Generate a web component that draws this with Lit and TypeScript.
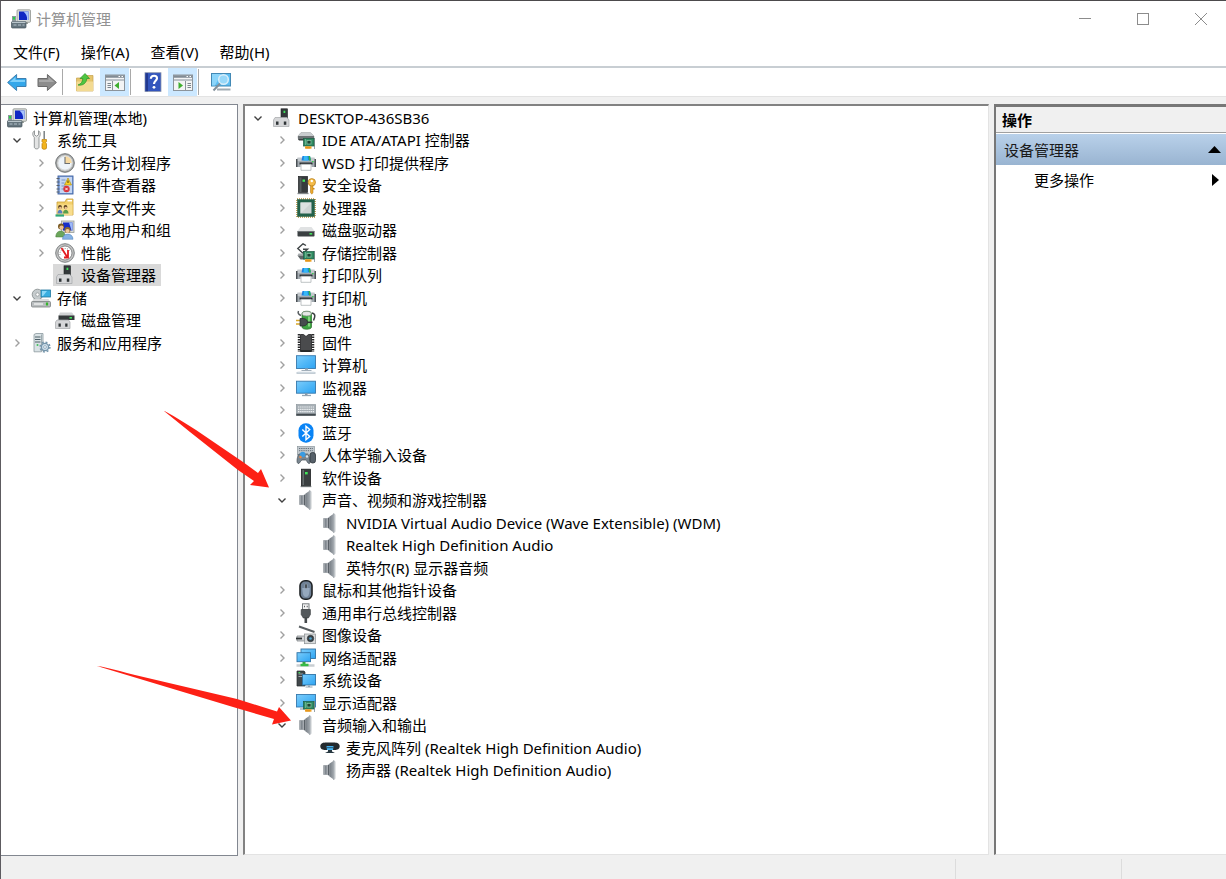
import { LitElement, html, svg, css, SVGTemplateResult, TemplateResult } from "lit";
import { customElement, property, state } from "lit/decorators.js";
import { classMap } from "lit/directives/class-map.js";

/* ---------- reusable pieces of the 20 x 20 icons ---------- */

const card = svg`
  <path d="M18.500 8v11" stroke="#9aa3a8" stroke-width="1"/>
  <rect x="7.500" y="8.500" width="10.500" height="7.500" fill="#2f8a62" stroke="#1d5c43" stroke-width=".7"/>
  <rect x="11" y="10.500" width="4" height="3.500" fill="#1c4634" stroke="#8fc9a9" stroke-width=".7"/>
  <path d="M9 10h1M9 12h1M9 14h1" stroke="#9fd8b8"/>
  <path d="M9 17.500h6.500" stroke="#f0a020" stroke-width="2.400"/>
  <path d="M11 16.500v2.500M13 16.500v2.500" stroke="#c97908" stroke-width=".5"/>`;

const printer = svg`
  <path d="M1.500 4.500h17L20 8.500H0z" fill="#c3c8cc"/>
  <path d="M6.500 3h7.500l1 4.500H5.500z" fill="#1d7fe0"/>
  <path d="M8 3h3.500l.5 4.500H7.500z" fill="#35b9f5"/>
  <path d="M12.500 3H14l1 4.500h-2z" fill="#35b34a"/>
  <path d="M0 8h20v6h-4.500v-3h-11v3H0z" fill="#a3abb1"/>
  <path d="M0 6h1.500v8H0zM18.500 6H20v8h-1.500z" fill="#4a5055"/>
  <path d="M3.500 9.500h13v2h-13z" fill="#2c3135"/>
  <path d="M5 11.300h10v6H5z" fill="#fff" stroke="#a4aaae" stroke-width=".7"/>
  <rect x="16" y="8" width="1.500" height="1.200" fill="#38d24c"/>`;

const speaker = svg`
  <path d="M3.500 5.500h4.500V14.500H3.500z" fill="url(#metal)" stroke="#858b92" stroke-width=".6"/>
  <path d="M7.500 5 14 .5v19.200L7.500 15z" fill="url(#metal)"/>
  <path d="M8.500 5v10" stroke="#596066" stroke-width="1.200"/>
  <path d="M13.500.5c1 0 1.500 1 1.500 2v15c0 1.200-.5 2.200-1.500 2.200z" fill="#cfd3d7" stroke="#8d949a" stroke-width=".5"/>`;

const mmc = svg`
  <rect x="6" y=".8" width="13.500" height="12.500" rx="1" fill="#d7dad6" stroke="#8f948f" stroke-width=".8"/>
  <rect x="8" y="2.500" width="9.500" height="8.500" fill="#1128c4"/>
  <path d="M12.500 2.500h5V11H16c.6-3-.8-6-3.500-8.500z" fill="#a8c4fb"/>
  <path d="M11 13h6v2h-6z" fill="#9ca29d"/>
  <path d="M1 7h4v6H1z" fill="#8d989c"/>
  <path d="M2 8h2v2.500H2z" fill="#29d04a"/>
  <rect x=".5" y="12.500" width="14.500" height="6.500" rx="1" fill="#65757e" stroke="#43515a" stroke-width=".7"/>
  <path d="M1 13.300h13.500" stroke="#c3ced4" stroke-width="1.200"/>
  <path d="M2.500 16h3M7 16h3M11.500 16h2" stroke="#b4c2ca"/>`;

const deviceBox = svg`
  <rect x="9" y=".8" width="6.500" height="10" fill="#33383a" stroke="#1f2324" stroke-width=".6"/>
  <rect x="11.500" y="2.700" width="1.800" height="2.300" fill="#3fe05a"/>
  <path d="M3 9.500h12l2 2.500v6.500H1.500V12z" fill="#d5d6d8" stroke="#a3a6a9" stroke-width=".7"/>
  <rect x="4" y="13.500" width="2.500" height="3.300" fill="#2f3436"/>
  <rect x="11.800" y="13.500" width="2.500" height="3.300" fill="#2f3436"/>`;

const ICONS: Record<string, SVGTemplateResult> = {
  mmc,
  deviceBox,
  printer,
  speaker,
  tools: svg`
    <path d="M3.500.8v4l2 1.400 2-1.400v-4C9.500 1.800 10 5 8 7.500v9.500c0 2.500-4.700 2.500-4.700 0V7.500C1 5 1.500 1.800 3.500.8z" fill="#e3e4e4" stroke="#7e8384" stroke-width=".8"/>
    <path d="M13.200 1v8" stroke="#7b8184" stroke-width="1.500"/>
    <path d="M11 9.500h4.500v2.200l-1 1 1 1V18c0 1.800-4.500 1.800-4.500 0v-4.300l1-1-1-1z" fill="#f3b41d" stroke="#b77c0a" stroke-width=".7"/>`,
  clock: svg`
    <circle cx="10" cy="10" r="9.300" fill="#a9abab" stroke="#6f7374"/>
    <circle cx="10" cy="10" r="7.200" fill="#eef4fa" stroke="#dadcdc" stroke-width="1.200"/>
    <path d="M10 3.200a6.800 6.800 0 0 1 6.800 6.800H10z" fill="#f6d9a2"/>
    <path d="M10 4v6.500h5" fill="none" stroke="#6c6f71" stroke-width="1.100"/>`,
  events: svg`
    <rect x="3" y="1" width="15" height="18" fill="#86a6dc" stroke="#3a5d9e" stroke-width=".9"/>
    <path d="M5 2h12v16H5z" fill="#c5d6f2"/>
    <path d="M6.500 5h4M6.500 8h3M6.500 11h4M6.500 14h3" stroke="#6583b8" stroke-width=".8"/>
    <path d="M1.500 3.500h3M1.500 7h3M1.500 10.500h3M1.500 14h3M1.500 17h3" stroke="#596068" stroke-width="1.200"/>
    <path d="m13 3 3.500 7h-7z" fill="#fbd22a" stroke="#a88503" stroke-width=".6"/>
    <path d="M13 5.500v2.500" stroke="#473b05"/>
    <circle cx="11.500" cy="14" r="3.200" fill="#d9323b"/>
    <path d="m10.300 12.800 2.400 2.400m0-2.400-2.400 2.400" stroke="#fff" stroke-width=".9"/>`,
  shared: svg`
    <path d="M2 4h8l1.500-3H18v16H2z" fill="#f2cf6a" stroke="#c99f37" stroke-width=".8"/>
    <path d="M12.500 2.700h4.500" stroke="#fff" stroke-width="1.500"/>
    <path d="M2.500 6.500h15V17h-15z" fill="#f8dd8c"/>
    <circle cx="5" cy="9" r="1.900" fill="#5b4220"/><circle cx="10.500" cy="9" r="1.900" fill="#5b4220"/>
    <circle cx="5.300" cy="10" r="1.300" fill="#edbf92"/><circle cx="10.800" cy="10" r="1.300" fill="#edbf92"/>
    <path d="M2.500 15.500c0-5 5-5 5 0z" fill="#5a7fbf"/><path d="M8 15.500c0-5 5.500-5 5.500 0z" fill="#5a9e4c"/>
    <path d="M.5 17.500h8.500" stroke="#2fa779" stroke-width="2.200"/>`,
  users: svg`
    <rect x="6.500" y="1" width="12.500" height="11.500" fill="#d8dbd8" stroke="#979c98" stroke-width=".8"/>
    <path d="M8 2.500h9.500v8H8z" fill="#172ec9"/><path d="M14 2.500h3.500v8h-1z" fill="#9dbaf8"/>
    <circle cx="6" cy="6.500" r="3" fill="#7a5a24"/><circle cx="6.500" cy="7.500" r="2.100" fill="#edc292"/>
    <path d="M.8 17c0-8 9.500-8 9.500 0z" fill="#6ba65b" stroke="#447a38" stroke-width=".5"/>
    <circle cx="12.500" cy="10" r="3" fill="#8d6a31"/><circle cx="12.500" cy="11" r="2.100" fill="#f0cb9e"/>
    <path d="M7.500 19.300c0-7 10.500-7 10.500 0z" fill="#86b2e4" stroke="#4b7eb8" stroke-width=".5"/>`,
  gauge: svg`
    <circle cx="10" cy="10" r="9.300" fill="#c3c4c4" stroke="#7d8182"/>
    <circle cx="10" cy="10" r="7" fill="#fff" stroke="#6d7071" stroke-width=".8"/>
    <path d="M5 12a5.500 5.500 0 0 1 10-4" fill="none" stroke="#8a8d8e" stroke-dasharray="1 1.200"/>
    <path d="m6.500 5 6 9.500M13 7v7.500H9" fill="none" stroke="#e21a1f" stroke-width="1.800"/>`,
  storage: svg`
    <path d="M2.500 11.500V5h8v6.500z" fill="#cfd2d4"/>
    <circle cx="6.500" cy="6.500" r="5.300" fill="#c5cbcd" stroke="#7f8688" stroke-width=".8"/>
    <circle cx="6.500" cy="6.500" r="1.700" fill="#fff" stroke="#8a9092" stroke-width=".7"/>
    <rect x="10" y="2" width="9.500" height="7" fill="#38aee0" stroke="#24789f" stroke-width=".8"/>
    <path d="M11 3h5l-4 5h-1z" fill="#8bd8f7"/>
    <path d="M2.500 11h15l2 3.500H.5z" fill="#d9dbdc"/>
    <rect x=".5" y="13.500" width="19" height="5.500" rx="1" fill="#b9bdbf" stroke="#7b8082" stroke-width=".8"/>
    <path d="M3 16h9" stroke="#f4f4f4" stroke-width="1.300"/><path d="M16 14.500v3" stroke="#35b52b" stroke-width="2.200"/>`,
  diskmgmt: svg`
    <path d="M5 2.500h12L19.500 6h-16z" fill="#d1d3d5"/>
    <rect x="3.500" y="5.500" width="16" height="4.500" fill="#34393b"/>
    <rect x="14.500" y="7" width="2.500" height="1.600" fill="#40e35a"/>
    <path d="M2 10h11.500l1.500 2v6.500H.5V12z" fill="#d5d6d8" stroke="#a3a6a9" stroke-width=".7"/>
    <rect x="3.500" y="13.500" width="2.300" height="3.200" fill="#2f3436"/><rect x="10.200" y="13.500" width="2.300" height="3.200" fill="#2f3436"/>`,
  services: svg`
    <path d="M3 1.500 5 .5h7v16l-1.500 2.300H3z" fill="#d9e2e5" stroke="#8c999e" stroke-width=".8"/>
    <path d="M10.500 1.500v17" stroke="#9eabb0"/>
    <path d="M4 4h5.500M4 6.500h5.500M4 9h5.500" stroke="#4e6069" stroke-width="1.100"/>
    <circle cx="6.500" cy="12" r="1" fill="#3fbf58"/>
    <circle cx="14" cy="14" r="3.600" fill="#cfe0ec" stroke="#7595ab" stroke-width="1.300"/>
    <circle cx="14" cy="14" r="4.900" fill="none" stroke="#7595ab" stroke-width="1.500" stroke-dasharray="1.900 1.950"/>
    <circle cx="14" cy="14" r="1.400" fill="#fff" stroke="#7595ab" stroke-width=".7"/>`,
  ide: svg`
    <path d="M5 2.500h9.500L18 6v2.500H2V6z" fill="#c9ccce" stroke="#9a9ea0" stroke-width=".5"/>
    <path d="M2 6h16v3.500H2z" fill="#6e7375"/><path d="M2 9h9v1.500H3z" fill="#3b4042"/>${card}`,
  security: svg`
    <rect x="2.500" y="1.500" width="9" height="16" fill="#363b3d" stroke="#1d2021" stroke-width=".7"/>
    <path d="M3.500 2.500h2V17h-2z" fill="#565d5f"/>
    <rect x="6.500" y="4.500" width="2.500" height="2.300" fill="#41e65a"/>
    <path d="M1.500 18.500h11" stroke="#82888a" stroke-width="1.300"/>
    <path d="M14.500 10h2.500v7.500l-1.200 1.700-1.300-1.700z" fill="#eda92d" stroke="#a9700d" stroke-width=".5"/>
    <path d="M17 13h1.500v1.500H17z" fill="#c98a1a"/>
    <circle cx="15.800" cy="7.300" r="3.700" fill="#f4bb4a" stroke="#b27a15" stroke-width=".7"/>
    <circle cx="15.800" cy="6" r="1.200" fill="#fff"/>`,
  cpu: svg`
    <rect x="1" y="1" width="18" height="18" fill="none" stroke="#b18b33" stroke-width="1.600" stroke-dasharray="1 1"/>
    <rect x="1.500" y="1.500" width="17" height="17" fill="#23614a" stroke="#3b6b50" stroke-width=".6"/>
    <rect x="4.500" y="4.500" width="11" height="11" fill="#cfd4d4"/>
    <path d="M4.500 15.500v-11h11z" fill="#dde1e1"/>`,
  drive: svg`
    <path d="M4.500 7h11L18.500 11h-17z" fill="#e0e2e3"/>
    <rect x="1.500" y="11" width="17" height="5.500" rx=".7" fill="#3b4042"/>
    <path d="M1.500 11.500h17" stroke="#6e7476"/><rect x="13.500" y="13" width="2.700" height="1.600" fill="#42e55a"/>`,
  storctl: svg`
    <path d="M10 2.500 7 .8 1.800 5.500 7 10.200l4.500-4H7" fill="none" stroke="#3f4446" stroke-width="1.400"/>
    <path d="M2.500 10.500h6v2h-7z" fill="#a6abad"/>
    <path d="M1.500 12.500H9v4H4.500z" fill="#5f6567"/>${card}`,
  battery: svg`
    <path d="M2.500 1c-1 2 0 3.500 2.500 4.500" fill="none" stroke="#555b5d" stroke-width="1.500"/>
    <path d="M16 3c4 1 3 4 1.500 7.500" fill="none" stroke="#3b4042" stroke-width="1.500"/>
    <path d="M6 3.500c0-3 9.500-3 9.500 0V17c0 3-9.500 3-9.500 0z" fill="#3ea542" stroke="#267029" stroke-width=".7"/>
    <ellipse cx="10.700" cy="3.700" rx="4.500" ry="2.200" fill="#e5e8e5" stroke="#8b918c" stroke-width=".7"/>
    <path d="M13 6.500v10" stroke="#9be495" stroke-width="1.500"/>
    <path d="M0 10.500h4.500M0 14h4.500" stroke="#d8a62a" stroke-width="1.500"/>
    <path d="M4 8.500h3.500c3 .5 4 2 4 3.800s-1 3.200-4 3.700H4z" fill="#464c4e" stroke="#24282a" stroke-width=".7"/>
    <path d="M11.500 12.300h5" stroke="#303537" stroke-width="1.500"/>`,
  firmware: svg`
    <path d="M4.500 1.500h3l2.500 2 2.500-2h3v17h-11z" fill="#4a4b4d" stroke="#1f2021" stroke-width=".8"/>
    <path d="M3 1v18M17 1v18" stroke="#28292a" stroke-width="2.500" stroke-dasharray="1.500 1"/>
    <path d="M4.500 18h11" stroke="#1f2021" stroke-width="1.500"/>`,
  computer: svg`
    <rect x=".5" y=".7" width="19" height="12.800" fill="url(#screen)" stroke="#3779ad" stroke-width=".9"/>
    <path d="M9 13.500h3v2h-3zM5.500 15h10v1h-10z" fill="#a2afba"/>
    <path d="M.5 18h19" stroke="#a3b2bf" stroke-width="1.300"/><path d="M1.500 17h17" stroke="#dce5ec"/>`,
  monitor: svg`
    <rect x=".5" y="3.200" width="19" height="12" fill="url(#screen)" stroke="#3779ad" stroke-width=".9"/>
    <path d="M9 15.500h2.500v1.500H9z" fill="#8997a3"/><path d="M6 17.500h9" stroke="#96a5b2" stroke-width="1.300"/>`,
  keyboard: svg`
    <rect x=".3" y="4.500" width="19.400" height="11" fill="#a7afb5" stroke="#89939a" stroke-width=".6"/>
    <path d="M2 7h16M2 9.300h16M2 11.600h16" stroke="#eef1f3" stroke-width="1.200" stroke-dasharray="1.400 .7"/>
    <path d="M.3 14.700h19.400" stroke="#444b50" stroke-width="2"/>`,
  bluetooth: svg`
    <rect x="2.500" y=".3" width="15" height="19.400" rx="7.200" fill="#0a84f5"/>
    <path d="m6.300 6.500 7.400 7-3.700 3.200V3.300l3.700 3.200-7.400 7" fill="none" stroke="#fff" stroke-width="1.400"/>`,
  hid: svg`
    <rect x="1.500" y="1.500" width="17" height="8.500" fill="#c1c8cd" stroke="#8d979d" stroke-width=".7"/>
    <path d="M3 3.500h14M3 5.700h14" stroke="#65717a" stroke-dasharray="1.300 .9"/>
    <path d="M3 9h8.500c3 2 3 9 2 9.500-2 .5-2.500-3.500-4-3.500H6c-1.500 0-2 4-4 3.500C0 17.500 1.500 10.500 3 9z" fill="#7a8690" stroke="#414a51" stroke-width=".7"/>
    <circle cx="6.700" cy="9.500" r="2.800" fill="#3b9be1"/><circle cx="4.500" cy="12" r="1.200" fill="#f2873a"/><circle cx="11" cy="11.500" r="1.200" fill="#dfe5e9"/>
    <rect x="14" y="7.500" width="5.500" height="10.500" rx="2.500" fill="#566069" stroke="#2c3338" stroke-width=".8"/>`,
  software: svg`
    <rect x="5.500" y="1.200" width="9" height="16.500" fill="#3a3f40" stroke="#1d2021" stroke-width=".8"/>
    <path d="M6.500 2h1.500v15H6.500z" fill="#646b6c"/>
    <rect x="9" y="4" width="2.700" height="2.400" fill="#41e65a"/><path d="M4.700 18.500h10.600" stroke="#6f7576" stroke-width="1.300"/>`,
  mouse: svg`
    <rect x="4" y=".8" width="12" height="18.400" rx="5" fill="#6f8196" stroke="#1f2225" stroke-width="1.600"/>
    <path d="M6.200 8c.5 6 1 9 3.800 9s3.300-3 3.800-9z" fill="#95a8bd"/>
    <rect x="9" y="3.800" width="2" height="4.700" rx="1" fill="#24282c" stroke="#b7c4d2" stroke-width=".5"/>`,
  usb: svg`
    <rect x="6.500" y=".8" width="6.500" height="6" fill="#f4f4f4" stroke="#777c7f"/>
    <path d="M8 2.700h1v1.500H8zM10.700 2.700h1v1.500h-1z" fill="#565b5e"/>
    <path d="M5.200 6.500h9.200v5l-2 3.500H7.300l-2.100-3.500z" fill="#54595c" stroke="#323638" stroke-width=".6"/>
    <path d="M9.800 14.500V20" stroke="#44494b" stroke-width="2.600"/>`,
  camera: svg`
    <path d="M3 1.500 18.500 7" stroke="#575d60" stroke-width="1.900"/>
    <path d="M1 11h8v5H1z" fill="#cfd2d4" stroke="#74797c" stroke-width=".7"/><path d="M0 13.500h6" stroke="#2e3335" stroke-width="1.800"/>
    <rect x="8.500" y="9" width="11" height="9.700" fill="#d8dadb" stroke="#878c8f" stroke-width=".7"/>
    <circle cx="14.500" cy="13.500" r="3.200" fill="#39434a" stroke="#1f2528" stroke-width=".6"/><circle cx="14.500" cy="13.500" r="1.300" fill="#4da3ce"/>`,
  network: svg`
    <rect x="5" y="1" width="14.500" height="9.500" fill="url(#screen)" stroke="#2f73a6" stroke-width=".9"/>
    <rect x="1" y="4.700" width="13.500" height="9" fill="url(#screen)" stroke="#2f73a6" stroke-width=".9"/>
    <path d="M6.500 14h3v2.500h-3z" fill="#36a546"/><path d="M.5 17.500h18" stroke="#c9ced2" stroke-width="2.500"/>
    <path d="M4.500 17h8" stroke="#37bb46" stroke-width="2.500"/>`,
  system: svg`
    <path d="M1 1h7l1 1v14H1z" fill="#40474a" stroke="#262b2d" stroke-width=".7"/>
    <path d="M2.500 4h4.500M2.500 6.500h4.500" stroke="#9da5a9"/><rect x="2.500" y="2" width="1.700" height="1.200" fill="#41e65a"/>
    <rect x="6.500" y="4.500" width="13" height="10.500" fill="url(#screen)" stroke="#2f73a6" stroke-width=".9"/>
    <path d="M12 15.500h2v1h-2zM9.500 16.500h7v1h-7z" fill="#93a3af"/>`,
  display: svg`
    <rect x=".5" y="1.500" width="19" height="12.500" fill="url(#screen)" stroke="#3779ad" stroke-width=".9"/>
    <path d="M4 16h5" stroke="#96a5b2" stroke-width="1.300"/>${card}`,
  mic: svg`
    <path d="M.3 8.500c0-3.500 3-4 6-4h7.400c3 0 6 .5 6 4 0 2.500-2.500 3.500-5 3.500H5.300c-2.500 0-5-1-5-3.500z" fill="#232a2e"/>
    <path d="M6.500 8h7l-.5 4H7z" fill="#45b2ee"/><path d="M7 9.700h6" stroke="#1a3b50" stroke-width=".8"/>
    <path d="M8 12h4v1.500l3 1.500H5l3-1.500z" fill="#263740"/>`,

  back: svg`<path d="m.6 10.500 9-8v4H19v8H9.600v4z" fill="#33a7ea" stroke="#3d7fb0" stroke-linejoin="round"/>
    <path d="m2.800 10 5.700-5v3h9.500v2z" fill="#7ed0fa"/>`,
  forward: svg`<path d="M19.400 10.500l-9-8v4H1v8h9.400v4z" fill="#8d8d8d" stroke="#6a6a6a" stroke-linejoin="round"/>
    <path d="M17.200 10 11.500 5v3H2v2z" fill="#a9a9a9"/>`,
  folderUp: svg`
    <path d="M1.500 6h7l2-2.500h7.500V19H1.500z" fill="#e6c56c" stroke="#c6a14a" stroke-width=".7"/>
    <path d="M1.500 9.500H18V19H1.500z" fill="#f3da92"/>
    <path d="M3 13c3-1 4.500-3 4.800-6.500H5L10 1.500l4.500 5h-2.700C11.500 11 8 14 3 13z" fill="#4fc641" stroke="#2d9326" stroke-width=".7"/>`,
  paneLeft: svg`
    <rect x=".5" y="3" width="19" height="15.500" fill="#f3f4f5" stroke="#8c949b"/>
    <path d="M1 4.500h18" stroke="#818b94" stroke-width="2.500"/><path d="M1 8h18" stroke="#aab2b8" stroke-width="1.500"/>
    <path d="M13.500 4.500h1.500M16.500 4.500H18" stroke="#fff"/>
    <path d="M7.500 9v9.500" stroke="#8c949b"/><path d="M2.500 11.500h3.500M2.500 13.500h3.500M2.500 15.500h3.500" stroke="#7b858d"/>
    <path d="M14 10v7l-4.500-3.500z" fill="#3fae2e"/>`,
  paneRight: svg`
    <rect x=".5" y="3" width="19" height="15.500" fill="#f3f4f5" stroke="#8c949b"/>
    <path d="M1 4.500h18" stroke="#818b94" stroke-width="2.500"/><path d="M1 8h18" stroke="#aab2b8" stroke-width="1.500"/>
    <path d="M13.500 4.500h1.500M16.500 4.500H18" stroke="#fff"/>
    <path d="M12.500 9v9.500" stroke="#8c949b"/><path d="M14.500 11.500H18M14.500 13.500H18M14.500 15.500H18" stroke="#7b858d"/>
    <path d="M5.500 10v7l4.500-3.500z" fill="#3fae2e"/>`,
  help: svg`
    <rect x="2" y=".7" width="16" height="18.800" fill="#3355bd" stroke="#8f9aae" stroke-width=".8"/>
    <path d="M2.500 1.200h2.500v18H2.500z" fill="#22398f"/>
    <path d="M7.800 6.700c.2-4 6.500-3.800 6.200-.3-.2 2.300-3 2.600-3 5.600" fill="none" stroke="#fff" stroke-width="2.100"/>
    <circle cx="11" cy="15.300" r="1.400" fill="#fff"/>`,
  scan: svg`
    <rect x=".5" y="1.500" width="19" height="12.500" fill="#5bbdf2" stroke="#4389b5"/>
    <path d="M1 2h9l-6 11.500H1z" fill="#8bd5fa"/>
    <path d="M6 17.500h13.500" stroke="#a0abb3" stroke-width="2"/>
    <circle cx="12.500" cy="7.500" r="4.800" fill="#a7defa" fill-opacity=".8" stroke="#d9eefa" stroke-width="1.500"/>
    <path d="m9 11.500-6.500 7" stroke="#82909a" stroke-width="2"/>`,
};

interface Item {
  level: number;
  icon: string;
  text: string;
  state?: "open" | "closed";
  selected?: boolean;
}

const item = (level: number, icon: string, text: string, st?: "open" | "closed", selected = false): Item => ({
  level, icon, text, state: st, selected,
});

const CONSOLE: Item[] = [
  item(0, "mmc", "计算机管理(本地)"),
  item(1, "tools", "系统工具", "open"),
  item(2, "clock", "任务计划程序", "closed"),
  item(2, "events", "事件查看器", "closed"),
  item(2, "shared", "共享文件夹", "closed"),
  item(2, "users", "本地用户和组", "closed"),
  item(2, "gauge", "性能", "closed"),
  item(2, "deviceBox", "设备管理器", undefined, true),
  item(1, "storage", "存储", "open"),
  item(2, "diskmgmt", "磁盘管理"),
  item(1, "services", "服务和应用程序", "closed"),
];

const DEVICES: Item[] = [
  item(0, "deviceBox", "DESKTOP-436SB36", "open"),
  item(1, "ide", "IDE ATA/ATAPI 控制器", "closed"),
  item(1, "printer", "WSD 打印提供程序", "closed"),
  item(1, "security", "安全设备", "closed"),
  item(1, "cpu", "处理器", "closed"),
  item(1, "drive", "磁盘驱动器", "closed"),
  item(1, "storctl", "存储控制器", "closed"),
  item(1, "printer", "打印队列", "closed"),
  item(1, "printer", "打印机", "closed"),
  item(1, "battery", "电池", "closed"),
  item(1, "firmware", "固件", "closed"),
  item(1, "computer", "计算机", "closed"),
  item(1, "monitor", "监视器", "closed"),
  item(1, "keyboard", "键盘", "closed"),
  item(1, "bluetooth", "蓝牙", "closed"),
  item(1, "hid", "人体学输入设备", "closed"),
  item(1, "software", "软件设备", "closed"),
  item(1, "speaker", "声音、视频和游戏控制器", "open"),
  item(2, "speaker", "NVIDIA Virtual Audio Device (Wave Extensible) (WDM)"),
  item(2, "speaker", "Realtek High Definition Audio"),
  item(2, "speaker", "英特尔(R) 显示器音频"),
  item(1, "mouse", "鼠标和其他指针设备", "closed"),
  item(1, "usb", "通用串行总线控制器", "closed"),
  item(1, "camera", "图像设备", "closed"),
  item(1, "network", "网络适配器", "closed"),
  item(1, "system", "系统设备", "closed"),
  item(1, "display", "显示适配器", "closed"),
  item(1, "speaker", "音频输入和输出", "open"),
  item(2, "mic", "麦克风阵列 (Realtek High Definition Audio)"),
  item(2, "speaker", "扬声器 (Realtek High Definition Audio)"),
];

/* Latin runs are set in their own face beside the Chinese text. */
const mixed = (text: string): Array<string | TemplateResult> =>
  text.split(/([\x20-\x7e]+)/).filter(Boolean).map((run) =>
    /^[\x20-\x7e]/.test(run) ? html`<span class="latin">${run}</span>` : run);

const latinStyle = css`
  .latin { font-family: "Noto Sans", "Open Sans", sans-serif; white-space: pre; }
`;

@customElement("ui-icon")
class UiIcon extends LitElement {
  @property() name = "";
  static styles = css`
    :host { display: block; flex: none; width: 20px; height: 20px; }
    svg { display: block; width: 100%; height: 100%; }
  `;
  render() {
    return html`<svg viewBox="0 0 20 20" aria-hidden="true">
      <defs>
        <linearGradient id="screen" x1="0" y1="0" x2="1" y2="1">
          <stop offset="0" stop-color="#7cccfb"/><stop offset=".5" stop-color="#52b8f7"/><stop offset="1" stop-color="#2ea3f2"/>
        </linearGradient>
        <linearGradient id="metal"><stop offset="0" stop-color="#c6cace"/><stop offset=".4" stop-color="#7d848b"/><stop offset="1" stop-color="#a4aab0"/></linearGradient>
      </defs>${ICONS[this.name]}</svg>`;
  }
}

@customElement("tree-view")
class TreeView extends LitElement {
  @property({ attribute: false }) items: Item[] = [];
  @property() label = "";
  @state() private folded = new Set<Item>();

  static styles = [latinStyle, css`
    :host { display: block; }
    ul { list-style: none; margin: 0; padding: 0; }
    li { display: flex; align-items: center; height: 23px; white-space: nowrap; }
    li:nth-child(even) { height: 22px; }
    .level-1 { padding-left: 24px; }
    .level-2 { padding-left: 48px; }
    .toggle, .leaf { flex: none; width: 14px; height: 14px; margin-right: 5px; }
    .toggle { display: grid; place-items: center; padding: 0; border: 0; background: none; color: #a0a0a0; }
    .toggle.open { color: #404040; }
    .toggle svg { display: block; width: 12px; height: 12px; fill: none; stroke: currentColor; stroke-width: 1.4; }
    .entry { display: flex; align-items: center; gap: 6px; height: 22px; padding: 0 5px 0 2px; line-height: 22px; }
    .selected { background: #d9d9d9; }
  `];

  private toggle(it: Item) {
    const next = new Set(this.folded);
    next.has(it) ? next.delete(it) : next.add(it);
    this.folded = next;
  }

  private visible() {
    let limit = Infinity;
    return this.items.filter((it) => {
      if (it.level > limit) return false;
      limit = this.folded.has(it) ? it.level : Infinity;
      return true;
    });
  }

  render() {
    return html`<ul role="tree" aria-label=${this.label}>${this.visible().map((it) => {
      const open = it.state === "open" && !this.folded.has(it);
      return html`<li role="treeitem" class="level-${it.level}" aria-selected=${it.selected ? "true" : "false"}>
        ${it.state
          ? html`<button class=${classMap({ toggle: true, open })} aria-label=${it.text} aria-expanded=${open ? "true" : "false"}
              @click=${() => it.state === "open" && this.toggle(it)}>
              <svg viewBox="0 0 12 12"><path d=${open ? "M2.500 4.500 6 8l3.500-3.500" : "M4.500 2.500 8 6l-3.500 3.500"}/></svg>
            </button>`
          : html`<span class="leaf"></span>`}
        <span class=${classMap({ entry: true, selected: !!it.selected })}>
          <ui-icon name=${it.icon}></ui-icon><span>${mixed(it.text)}</span>
        </span>
      </li>`;
    })}</ul>`;
  }
}

@customElement("app-root")
class AppRoot extends LitElement {
  static styles = [latinStyle, css`
    :host {
      display: block; position: relative; overflow: hidden;
      font: 15px/22px "Noto Sans CJK SC", sans-serif; color: #000;
    }
    * { box-sizing: border-box; }
    button { font: inherit; color: inherit; border: 0; background: none; padding: 0; }
    .window {
      display: flex; flex-direction: column; min-height: 100vh;
      border-top: 1px solid #4c4a4c; border-left: 1px solid #5d5b60; background: #fff;
    }
    .titlebar { display: flex; align-items: center; height: 36px; padding: 0 2px 0 10px; color: #929292; }
    .titlebar h1 { flex: 1; margin: 0 0 0 5px; font-size: 15px; line-height: 22px; font-weight: 400; }
    .controls { display: flex; gap: 12px; }
    .controls button { display: grid; place-items: center; width: 46px; height: 37px; }
    .controls svg { width: 14px; height: 14px; fill: none; stroke: #8c8c8c; shape-rendering: crispEdges; }
    .controls .cross { shape-rendering: auto; }
    .menubar { display: flex; gap: 21px; height: 29px; padding: 1px 0 0 12px; }
    .toolbar {
      display: flex; align-items: center; height: 31px;
      border-top: 2px solid #c8ced3; border-bottom: 1px solid #e3e3e3; background: #fff;
    }
    .toolbar button { display: grid; place-items: center; width: 29px; height: 28px; margin-left: 1px; }
    .toolbar .on { background: #cce8ff; }
    .separator { width: 1px; height: 26px; margin: 0 6px 0 1px; background: #a9a9a9; }
    .panes {
      flex: 1; display: grid; grid-template-columns: 237px minmax(0, 1fr) 232px; gap: 5px;
      padding-top: 7px; background: #f0f0f0;
    }
    .console { border: 1px solid #828790; border-left: 0; background: #fff; padding-top: 1px; overflow: hidden; }
    .console-tree { display: block; margin-left: -15px; }
    .devices {
      border: 2px solid #828282; border-right: 1px solid #e3e3e3; border-bottom: 1px solid #e3e3e3;
      background: #fff; padding-left: 6px; margin-bottom: 1px;
    }
    .actions {
      border: 2px solid #777; border-top-width: 3px; border-right: 0; border-bottom: 1px solid #e3e3e3;
      background: #fff; margin-bottom: 1px;
    }
    .actions h2 {
      margin: 0; padding-left: 6px; height: 26px; font-size: 15px; line-height: 26px; font-weight: 700;
      background: #f0f0f0; border-bottom: 1px solid #a0a0a0;
    }
    .actions button { display: flex; align-items: center; justify-content: space-between; width: 100%; height: 31px; }
    .actions .group {
      margin-top: 1px; padding: 0 5px 0 8px; color: #1a1a1a;
      background: linear-gradient(#b9d1ea, #99b4d1);
    }
    .actions .more { height: 30px; padding: 0 7px 0 38px; }
    .actions svg { display: block; fill: #000; }
    .statusbar {
      display: grid; grid-template-columns: minmax(0, 1fr) 166px 105px; height: 23px; padding-top: 3px; background: #f0f0f0;
    }
    .statusbar span + span { border-left: 1px solid #dcdcdc; }
    .marks { position: absolute; left: 0; top: 0; width: 300px; height: 740px; fill: #fd2015; pointer-events: none; }
  `];

  private tool(icon: string, label: string, on = false) {
    return html`<button class=${on ? "on" : ""} aria-label=${label}><ui-icon name=${icon}></ui-icon></button>`;
  }

  render() {
    return html`
      <div class="window">
        <header class="titlebar">
          <ui-icon name="mmc"></ui-icon>
          <h1>计算机管理</h1>
          <div class="controls">
            <button aria-label="最小化"><svg viewBox="0 0 14 14"><path d="M1 6.500h12"/></svg></button>
            <button aria-label="最大化"><svg viewBox="0 0 14 14"><path d="M1.500 1.500h11v11h-11z"/></svg></button>
            <button aria-label="关闭"><svg class="cross" viewBox="0 0 14 14"><path d="m1 1 12 12M13 1 1 13"/></svg></button>
          </div>
        </header>
        <nav class="menubar">
          ${["文件(F)", "操作(A)", "查看(V)", "帮助(H)"].map((m) => html`<button>${mixed(m)}</button>`)}
        </nav>
        <div class="toolbar" role="toolbar">
          ${this.tool("back", "后退")}${this.tool("forward", "前进")}
          <span class="separator"></span>
          ${this.tool("folderUp", "上移一级")}${this.tool("paneLeft", "显示/隐藏控制台树", true)}
          <span class="separator"></span>
          ${this.tool("help", "帮助")}${this.tool("paneRight", "显示/隐藏操作窗格", true)}
          <span class="separator"></span>
          ${this.tool("scan", "扫描检测硬件改动")}
        </div>
        <main class="panes">
          <section class="console">
            <tree-view class="console-tree" label="控制台树" .items=${CONSOLE}></tree-view>
          </section>
          <section class="devices">
            <tree-view label="设备" .items=${DEVICES}></tree-view>
          </section>
          <aside class="actions">
            <h2>操作</h2>
            <button class="group">设备管理器<svg width="13" height="7" viewBox="0 0 13 7"><path d="M0 7 6.500 0 13 7z"/></svg></button>
            <button class="more">更多操作<svg width="7" height="12" viewBox="0 0 7 12"><path d="M0 0l7 6-7 6z"/></svg></button>
          </aside>
        </main>
        <footer class="statusbar"><span></span><span></span><span></span></footer>
      </div>
      <svg class="marks" viewBox="0 0 300 740" aria-hidden="true">
        <path d="M164 411 Q166 411 196 430 L243 462 258 473 261 469 269 487.500 250 485 254 481 238 470 190 432z"/>
        <path d="M97 666 Q99 665.500 135 675 L237 699 277 711.500 279 707 291 720.500 272 724.500 274 719 233 707 150 682z"/>
      </svg>`;
  }
}
